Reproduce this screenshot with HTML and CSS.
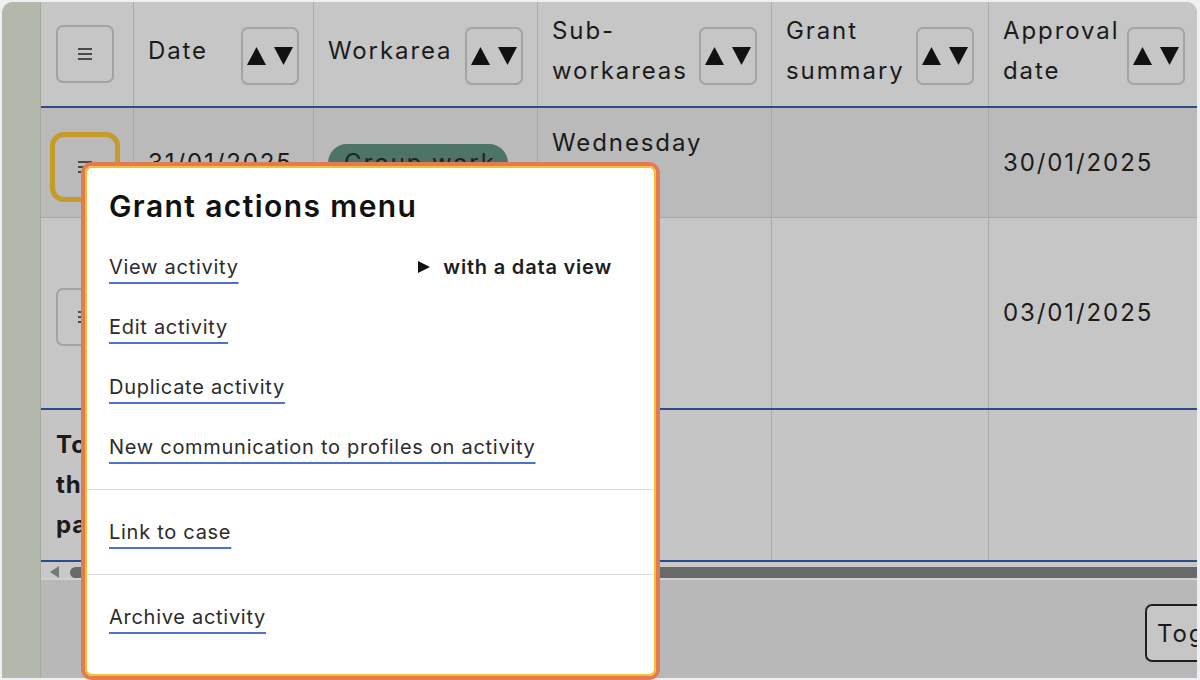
FILE: index.html
```html
<!DOCTYPE html>
<html lang="en">
<head>
<meta charset="utf-8">
<title>Grant activities</title>
<link rel="stylesheet" href="styles.css">
</head>
<body>
<div class="window">
  <aside class="sidebar"></aside>
  <main class="main">
    <div class="grid">
      <div class="row head">
        <div class="cell c0"><button class="icon-btn" aria-label="Table menu"><svg width="14" height="12" viewBox="0 0 14 12"><path d="M0 1H14M0 6H14M0 11H14" stroke="#222" stroke-width="1.6"/></svg></button></div>
        <div class="cell th"><span class="label">Date</span><button class="sort-btn" aria-label="Sort"><svg width="46" height="18" viewBox="0 0 46 18"><polygon points="0,18 9.5,0 19,18" fill="#111"/><polygon points="27,0 46,0 36.5,18" fill="#111"/></svg></button></div>
        <div class="cell th"><span class="label">Workarea</span><button class="sort-btn" aria-label="Sort"><svg width="46" height="18" viewBox="0 0 46 18"><polygon points="0,18 9.5,0 19,18" fill="#111"/><polygon points="27,0 46,0 36.5,18" fill="#111"/></svg></button></div>
        <div class="cell th"><span class="label">Sub-<br>workareas</span><button class="sort-btn" aria-label="Sort"><svg width="46" height="18" viewBox="0 0 46 18"><polygon points="0,18 9.5,0 19,18" fill="#111"/><polygon points="27,0 46,0 36.5,18" fill="#111"/></svg></button></div>
        <div class="cell th"><span class="label">Grant<br>summary</span><button class="sort-btn" aria-label="Sort"><svg width="46" height="18" viewBox="0 0 46 18"><polygon points="0,18 9.5,0 19,18" fill="#111"/><polygon points="27,0 46,0 36.5,18" fill="#111"/></svg></button></div>
        <div class="cell th"><span class="label">Approval<br>date</span><button class="sort-btn" aria-label="Sort"><svg width="46" height="18" viewBox="0 0 46 18"><polygon points="0,18 9.5,0 19,18" fill="#111"/><polygon points="27,0 46,0 36.5,18" fill="#111"/></svg></button></div>
        <div class="cell th"><span class="label">Status</span></div>
      </div>

      <div class="row r1">
        <div class="cell c0 body0"><button class="icon-btn focused" aria-label="Grant actions"><svg width="14" height="12" viewBox="0 0 14 12"><path d="M0 1H14M0 6H14M0 11H14" stroke="#222" stroke-width="1.6"/></svg></button></div>
        <div class="cell td">31/01/2025</div>
        <div class="cell td"><span class="badge">Group work</span></div>
        <div class="cell td">Wednesday<br>group</div>
        <div class="cell td"></div>
        <div class="cell td">30/01/2025</div>
        <div class="cell td"></div>
      </div>

      <div class="row r2">
        <div class="cell c0 body0"><button class="icon-btn" aria-label="Grant actions"><svg width="14" height="12" viewBox="0 0 14 12"><path d="M0 1H14M0 6H14M0 11H14" stroke="#222" stroke-width="1.6"/></svg></button></div>
        <div class="cell td">03/01/2025</div>
        <div class="cell td"><span class="badge">Outreach</span></div>
        <div class="cell td">Friday</div>
        <div class="cell td"></div>
        <div class="cell td">03/01/2025</div>
        <div class="cell td"></div>
      </div>

      <div class="row foot">
        <div class="cell td total">Total this page</div>
        <div class="cell td"></div>
        <div class="cell td"></div>
        <div class="cell td"></div>
        <div class="cell td"></div>
        <div class="cell td"></div>
        <div class="cell td"></div>
      </div>
    </div>

    <div class="hscroll"><span class="arrow"></span><span class="thumb"></span></div>

    <div class="bottom"><button class="toggle">Toggle columns</button></div>
  </main>
</div>

<div class="menu" role="menu">
  <div class="menu-inner">
    <h2 class="menu-title">Grant actions menu</h2>
    <div class="section">
      <div class="item"><a href="#" class="mi">View activity</a><span class="more"><svg class="tri" width="12" height="12" viewBox="0 0 12 12"><polygon points="0,0 12,6 0,12" fill="#111"/></svg>with a data view</span></div>
      <div class="item"><a href="#" class="mi">Edit activity</a></div>
      <div class="item"><a href="#" class="mi">Duplicate activity</a></div>
      <div class="item"><a href="#" class="mi">New communication to profiles on activity</a></div>
    </div>
    <div class="section">
      <div class="item"><a href="#" class="mi">Link to case</a></div>
    </div>
    <div class="section">
      <div class="item"><a href="#" class="mi">Archive activity</a></div>
    </div>
  </div>
</div>
</body>
</html>
```

FILE: styles.css
```css
* { box-sizing: border-box; }

html, body {
  margin: 0;
  width: 1200px;
  height: 680px;
  overflow: hidden;
}

body {
  position: relative;
  background: #eef0f3;
  font-family: "Inter", "Noto Sans", sans-serif;
  color: #1b1b1b;
}

.window {
  margin: 2px 3px 0 2px;
  height: 676px;
  border-radius: 11px 11px 0 0;
  overflow: hidden;
  display: flex;
}

.sidebar {
  flex: none;
  width: 39px;
  background: #b3b8ad;
  border-right: 1px solid #a4a8a0;
}

.main {
  flex: none;
  width: 1340px;
  display: flex;
  flex-direction: column;
  background: #b8b8b8;
}

.row {
  display: grid;
  grid-template-columns: 93px 180px 224px 234px 217px 211px 181px;
}

.head { height: 106px; background: #c6c6c6; border-bottom: 2px solid #2d4a8b; }
.r1 { height: 110px; background: #bababa; border-bottom: 1px solid #a9a9a9; }
.r2 { height: 192px; background: #c6c6c6; border-bottom: 2px solid #2d4a8b; }
.foot { height: 152px; background: #c5c5c5; border-bottom: 2px solid #2d4a8b; }

.cell {
  border-right: 1px solid #a9a9a9;
  font-size: 24px;
  line-height: 40px;
  letter-spacing: 1.9px;
  min-width: 0;
}

.c0 {
  display: flex;
  align-items: center;
  padding-left: 15px;
}

.body0 { padding-top: 8px; }

.th {
  display: flex;
  align-items: center;
  justify-content: space-between;
  padding: 0 14px 0 14px;
}

.label { margin-bottom: 6px; }

.td {
  display: flex;
  align-items: center;
  padding: 0 14px;
  white-space: nowrap;
}

.total {
  white-space: normal;
  font-weight: 700;
  letter-spacing: 1px;
  padding-left: 15px;
}

.icon-btn, .sort-btn {
  flex: none;
  width: 58px;
  height: 58px;
  border: 2px solid #a3a3a3;
  border-radius: 7px;
  background: transparent;
  display: flex;
  align-items: center;
  justify-content: center;
  padding: 0;
}

.sort-btn { margin-top: 4px; }

.icon-btn.focused {
  border-color: transparent;
  outline: 5px solid #c59c2b;
  outline-offset: 1px;
  border-radius: 8px;
}

.badge {
  background: #4d7467;
  color: #1c2622;
  border-radius: 19px;
  padding: 0 12px 0 16px;
  line-height: 38px;
}

.hscroll {
  flex: none;
  height: 18px;
  background: #c8c8c8;
  border-bottom: 2px solid #d0d0d0;
  display: flex;
  align-items: flex-end;
  padding-left: 9px;
}

.arrow {
  width: 0;
  height: 0;
  border-right: 9px solid #777;
  border-top: 6px solid transparent;
  border-bottom: 6px solid transparent;
}

.thumb {
  flex: 1;
  height: 11px;
  margin-left: 11px;
  background: #696969;
  border-radius: 6px 0 0 6px;
}

.bottom {
  flex: 1;
  background: #b8b8b8;
  display: flex;
  justify-content: flex-end;
  align-items: flex-start;
  padding: 24px 26px 0 0;
}

.toggle {
  width: 210px;
  height: 58px;
  border: 2px solid #1f1f1f;
  border-radius: 7px;
  background: #c6c6c6;
  font-family: inherit;
  font-size: 24px;
  letter-spacing: 1.9px;
  color: #1b1b1b;
  text-align: left;
  padding: 0 10px;
  white-space: nowrap;
}

/* Popup menu */
.menu {
  position: absolute;
  left: 81px;
  top: 162px;
  width: 579px;
  height: 518px;
  border: 4px solid #e27b52;
  border-radius: 11px;
  background: #fff;
}

.menu-inner {
  height: 100%;
  border: 2px solid #f3c12d;
  border-radius: 7px;
  background: #fff;
  padding-top: 21px;
}

.menu-title {
  margin: 0 0 2px;
  padding: 0 22px;
  font-size: 30px;
  line-height: 34px;
  font-weight: 600;
  letter-spacing: 1.4px;
  color: #111;
}

.section {
  padding: 12px 0;
  border-bottom: 1px solid #dcdcdc;
}

.section:last-child { border-bottom: 0; }

.item {
  height: 60px;
  display: flex;
  align-items: center;
  padding: 0 22px;
}

.mi {
  font-size: 20px;
  letter-spacing: 0.72px;
  color: #2b2b2b;
  text-decoration: underline;
  text-decoration-color: #4d72c9;
  text-decoration-thickness: 1.5px;
  text-underline-offset: 8px;
}

.more {
  margin-left: auto;
  margin-right: 20px;
  font-size: 20px;
  letter-spacing: 0.8px;
  font-weight: 600;
  color: #1e1e1e;
  display: flex;
  align-items: center;
}

.tri {
  margin-right: 13px;
}
```
